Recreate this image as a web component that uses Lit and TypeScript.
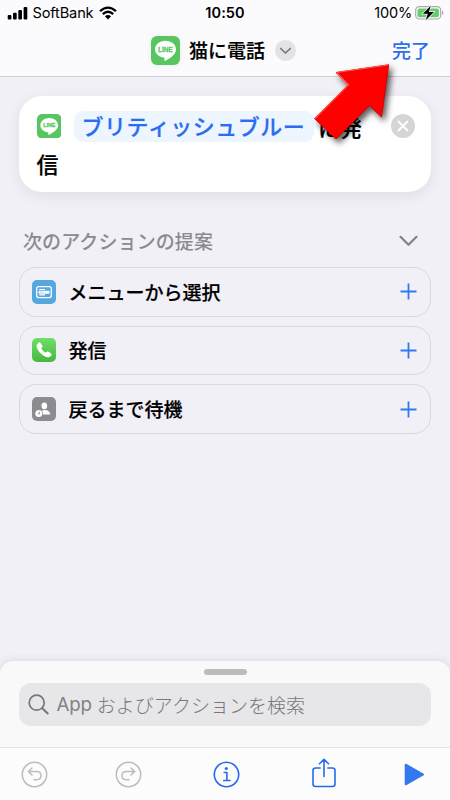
import { LitElement, html, css, svg } from "lit";
import { customElement, property } from "lit/decorators.js";

const fontStack = css`"Noto Sans CJK JP", "Noto Sans", sans-serif`;

@customElement("line-icon")
class LineIcon extends LitElement {
  static styles = css`
    :host { display: block; flex: none; }
    svg { display: block; width: 100%; height: 100%; }
    .word { font: 700 7.2px "Liberation Sans", sans-serif; fill: #57c660; stroke: #57c660; stroke-width: 0.3; }
  `;
  render() {
    return html`<svg viewBox="0 0 29 29">
      <rect width="29" height="29" rx="6" fill="#57c660" />
      <path fill="#fff" d="M14.5 4.8C8.600 4.800 4 8.600 4 13.300C4 17.500 7.700 20.900 12.600 21.600C13.900 21.900 13.500 22.900 13.300 24.100C13.200 24.800 13.700 25 14.300 24.700C17 23.300 20.600 21.100 22.900 18.400C24.300 16.900 25 15.200 25 13.300C25 8.600 20.400 4.800 14.500 4.800Z" />
      <text class="word" x="7.300" y="15.700" textLength="14.400" lengthAdjust="spacingAndGlyphs">LINE</text>
    </svg>`;
  }
}

const glyphs: Record<string, unknown> = {
  menu: svg`<rect width="24" height="24" rx="5" fill="#55a8df"/>
    <rect x="4.700" y="6.600" width="14.600" height="11" rx="2" fill="none" stroke="#fff" stroke-width="1.300"/>
    <path d="M7.300 9.500H13M7.300 14.900H13" stroke="#fff" stroke-width="1.100"/>
    <rect x="6.500" y="10.700" width="11" height="3" rx=".8" fill="#fff"/>
    <path d="M7.800 12.200H11.500" stroke="#8cc5ea" stroke-width=".7"/>`,
  phone: svg`<defs><linearGradient id="g" x1="0" y1="0" x2="0" y2="1"><stop stop-color="#70df69"/><stop offset="1" stop-color="#47b83f"/></linearGradient></defs>
    <rect width="24" height="24" rx="5" fill="url(#g)"/>
    <path fill="#fff" d="M6.600 4.700C7.300 4.100 8 4.200 8.500 4.900L10.200 7.500C10.700 8.300 10.500 9 9.900 9.600C9.200 10.300 9.300 10.600 9.700 11.200C10.600 12.500 11.700 13.600 13 14.400C13.600 14.700 13.800 14.600 14.300 14.100C15 13.400 15.700 13.300 16.500 13.800L19 15.500C19.800 16.100 19.900 16.800 19.300 17.500C18.100 19.100 16.400 19.700 14.300 18.900C10.100 17.300 6.300 13.500 4.800 9.400C4.100 7.400 4.900 5.900 6.600 4.700Z"/>`,
  wait: svg`<rect width="24" height="24" rx="5" fill="#8c8b91"/>
    <ellipse cx="12.300" cy="8.900" rx="2.800" ry="3.300" fill="#fff"/>
    <path fill="#fff" d="M7.600 15.800C8.600 13.700 10.300 12.900 12.400 12.900C15.500 12.900 18 14.500 18.200 16.700C18.200 17.300 17.900 17.600 17.300 17.600H9Z"/>
    <circle cx="6.800" cy="16.500" r="4.300" fill="#8c8b91"/>
    <circle cx="6.800" cy="16.500" r="3.500" fill="#fff"/>
    <path d="M7.500 14.800V16.900H5.700" fill="none" stroke="#8c8b91" stroke-width=".8"/>`,
};

@customElement("action-row")
class ActionRow extends LitElement {
  @property() icon = "menu";
  @property() label = "";
  static styles = css`
    :host {
      display: flex; align-items: center; box-sizing: border-box; height: 49.500px;
      border: 1.300px solid #d9d8dd; border-radius: 17px; padding: 0 13px 0 11.500px;
      font: 500 19px/28px ${fontStack};
    }
    .glyph { width: 24px; height: 24px; flex: none; margin-right: 13px; }
    .label { flex: 1; white-space: nowrap; -webkit-text-stroke: 0.2px #000; }
    .plus { width: 17px; height: 17px; flex: none; }
  `;
  render() {
    return html`
      <svg class="glyph" viewBox="0 0 24 24">${glyphs[this.icon]}</svg>
      <span class="label">${this.label}</span>
      <svg class="plus" viewBox="0 0 17 17"><path d="M8.500 .5V16.500M.5 8.500H16.500" stroke="#3478ee" stroke-width="1.800"/></svg>`;
  }
}

@customElement("app-root")
class AppRoot extends LitElement {
  static styles = css`
    :host {
      display: flex; flex-direction: column; position: relative; width: 450px; height: 800px;
      overflow: hidden; background: #f1f0f6; color: #000; font-family: ${fontStack};
    }
    svg { display: block; flex: none; }
    .top { height: 77px; box-sizing: border-box; background: #fbfbfd; border-bottom: 1.500px solid #d0d0d4; flex: none; }
    .status { height: 24px; display: grid; grid-template-columns: 1fr auto 1fr; align-items: center; padding: 0 6px 0 7px; font: 15px/24px Inter, sans-serif; }
    .carrier { display: flex; align-items: center; }
    .carrier span { margin: 1px 6px 0 4.500px; font-size: 14.600px; letter-spacing: -0.150px; }
    .clock { font-weight: 600; font-size: 14.500px; letter-spacing: 0.100px; padding-top: 1px; margin-left: -1px; }
    .power { display: flex; align-items: center; justify-content: flex-end; }
    .power span { margin: 1px 3px 0 0; font-size: 14.500px; letter-spacing: -0.200px; }
    .nav { height: 52px; display: grid; grid-template-columns: 1fr auto 1fr; align-items: center; padding: 0 20px; }
    .title { display: flex; align-items: center; font: 500 19px/28px ${fontStack}; -webkit-text-stroke: 0.200px #000; margin-left: -3px; }
    .app { width: 29px; height: 29px; margin-right: 9px; filter: drop-shadow(0 0 3px rgba(0,0,0,.06)); }
    .drop { margin-left: 10px; }
    .done { justify-self: end; font: 500 19px/28px ${fontStack}; color: #2c6fec; }
    .main { flex: 1; padding: 19px 19px 0; }
    .card {
      height: 96px; box-sizing: border-box; border-radius: 23px; background: #fff; padding: 11px 16.500px 0 17.500px;
      box-shadow: 0 4px 14px rgba(50,45,80,.09); font: 500 22px/36px ${fontStack};
    }
    .line { display: flex; align-items: center; height: 38px; -webkit-text-stroke: 0.200px currentColor; }
    .line.second { height: 36px; }
    .mini { width: 24.500px; height: 24.500px; margin-right: 12.500px; }
    .token { box-sizing: border-box; width: 240px; height: 31px; line-height: 28px; border-radius: 9px; padding-left: 8px; background: #edf5fe; color: #2b6df0; letter-spacing: 0.500px; white-space: nowrap; }
    .suffix { margin-left: 4.500px; flex: 1; white-space: nowrap; }
    .heading { display: flex; align-items: center; justify-content: space-between; height: 28px; margin: 35px 13px 12px 4px; font: 500 19px/28px ${fontStack}; color: #8b8a90; letter-spacing: 0.100px; }
    .rows { display: grid; gap: 9.200px; }
    .sheet { height: 86px; box-sizing: border-box; flex: none; background: #f9f9fa; border-radius: 13px 13px 0 0; box-shadow: 0 0 9px rgba(50,45,80,.13); padding: 7.500px 19px 0; }
    .grip { width: 43px; height: 6px; border-radius: 3px; background: #bcbcbd; margin: 0 auto 8.500px; }
    .search { height: 43px; border-radius: 12px; background: #e7e7e9; display: flex; align-items: center; padding-left: 9px; color: #77767c; font: 300 19px/28px ${fontStack}; }
    .search .latin { font: 400 18.800px/28px Inter, sans-serif; margin: 0 5px 0 7.500px; letter-spacing: -0.200px; color: #828187; }
    .bar { position: relative; height: 53px; box-sizing: border-box; flex: none; border-top: 1px solid #e5e5e7; background: #fcfcfc; display: flex; align-items: center; padding: 0 0 0 21px; }
    .redo { margin-left: 66.500px; }
    .info { margin-left: 71px; }
    .share { margin: -3px 0 0 72.500px; }
    .play { margin-left: 67.500px; }
    .arrow { position: absolute; left: 300px; top: 50px; filter: drop-shadow(3px 4px 3px rgba(0,0,0,.65)); }
  `;
  render() {
    return html`
      <header class="top">
        <div class="status">
          <div class="carrier">
            <svg width="21" height="14" viewBox="0 0 21 14"><rect x=".7" y="9" width="3.700" height="4.500" rx="1"/><rect x="6" y="6.800" width="3.700" height="6.700" rx="1"/><rect x="11.300" y="4" width="3.700" height="9.500" rx="1"/><rect x="16.600" y="1" width="3.700" height="12.500" rx="1"/></svg>
            <span>SoftBank</span>
            <svg width="18" height="14" viewBox="0 0 18 14"><g fill="none" stroke="#000" stroke-width="2.300"><path d="M1 5.200Q9-2 17 5.200"/><path d="M3.800 8.200Q9 3.400 14.200 8.200"/></g><path d="M5.900 10.200Q9 7.700 12.100 10.200L9 13.500Z"/></svg>
          </div>
          <div class="clock">10:50</div>
          <div class="power">
            <span>100%</span>
            <svg width="29" height="16" viewBox="0 0 29 16"><rect x=".7" y="1.700" width="25" height="12.300" rx="3.600" fill="none" stroke="#aaa" stroke-width="1.200"/><rect x="2.500" y="3.500" width="21.400" height="8.700" rx="2" fill="#65cb6c"/><path d="M27 5.800Q28.400 6.300 28.400 7.900T27 10Z" fill="#aaa"/><path d="M15.800.8L7.800 8.800H12.800L10.700 15.200L18.900 7H13.900Z" stroke="#fbfbfd" stroke-width="1.400" paint-order="stroke"/></svg>
          </div>
        </div>
        <div class="nav">
          <span></span>
          <div class="title">
            <line-icon class="app"></line-icon><span>猫に電話</span>
            <svg class="drop" width="21" height="21" viewBox="0 0 21 21"><circle cx="10.500" cy="10.500" r="10.500" fill="#e3e3e6"/><path d="M5.700 8.500L10.500 13L15.300 8.500" fill="none" stroke="#77767c" stroke-width="1.700" stroke-linecap="round" stroke-linejoin="round"/></svg>
          </div>
          <div class="done">完了</div>
        </div>
      </header>
      <main class="main">
        <section class="card">
          <div class="line">
            <line-icon class="mini"></line-icon><span class="token">ブリティッシュブルー</span><span class="suffix">に発</span>
            <svg width="24" height="24" viewBox="0 0 24 24"><circle cx="12" cy="12" r="12" fill="#d5d5d7"/><path d="M7.500 7.500L16.500 16.500M16.500 7.500L7.500 16.500" stroke="#fff" stroke-width="1.800" stroke-linecap="round"/></svg>
          </div>
          <div class="line second">信</div>
        </section>
        <div class="heading"><span>次のアクションの提案</span>
          <svg width="19" height="12" viewBox="0 0 19 12"><path d="M1.500 1.800L9.500 9.800L17.500 1.800" fill="none" stroke="#838288" stroke-width="2.200" stroke-linecap="round" stroke-linejoin="round"/></svg>
        </div>
        <div class="rows">
          <action-row icon="menu" label="メニューから選択"></action-row>
          <action-row icon="phone" label="発信"></action-row>
          <action-row icon="wait" label="戻るまで待機"></action-row>
        </div>
      </main>
      <section class="sheet">
        <div class="grip"></div>
        <div class="search">
          <svg width="21" height="21" viewBox="0 0 21 21" fill="none" stroke="#77767c" stroke-width="1.700" stroke-linecap="round"><circle cx="8.700" cy="8.700" r="7.500"/><path d="M14.300 14.300L19.700 19.400" stroke-width="2.100"/></svg>
          <span class="latin">App</span><span>およびアクションを検索</span>
        </div>
      </section>
      <nav class="bar">
        <svg class="undo" width="27" height="27" viewBox="0 0 27 27" fill="none" stroke="#bcbcbd" stroke-width="1.500" stroke-linecap="round" stroke-linejoin="round"><circle cx="13.500" cy="13.500" r="12.200"/><path d="M11 7L7.300 10.500L11 14M7.500 10.500H15.500C18.300 10.500 20 12.200 20 14.600S18.300 18.700 15.800 18.700H13"/></svg>
        <svg class="redo" width="27" height="27" viewBox="0 0 27 27" fill="none" stroke="#bcbcbd" stroke-width="1.500" stroke-linecap="round" stroke-linejoin="round"><circle cx="13.500" cy="13.500" r="12.200"/><path d="M16 7L19.700 10.500L16 14M19.500 10.500H11.500C8.700 10.500 7 12.200 7 14.600S8.700 18.700 11.200 18.700H14"/></svg>
        <svg class="info" width="27" height="27" viewBox="0 0 27 27" fill="none" stroke="#2669eb" stroke-width="1.600" stroke-linecap="round" stroke-linejoin="round"><circle cx="13.500" cy="13.500" r="12.200"/><circle cx="13.300" cy="7.500" r="1.600" fill="#2669eb" stroke="none"/><path d="M11.200 11.500H13.900V19.300M10.700 19.500H17"/></svg>
        <svg class="share" width="24" height="30" viewBox="0 0 24 30" fill="none" stroke="#2669eb" stroke-width="1.600" stroke-linecap="round" stroke-linejoin="round"><path d="M8.200 10H3.500Q1 10 1 12.500V26Q1 28.500 3.500 28.500H20.500Q23 28.500 23 26V12.500Q23 10 20.500 10H15.800M12 18.500V1.500M7.500 5.800L12 1.300L16.500 5.800"/></svg>
        <svg class="play" width="21" height="23" viewBox="0 0 21 23"><path d="M1.700 1.700V21.300L19.200 11.500Z" fill="#3478f0" stroke="#3478f0" stroke-width="2" stroke-linejoin="round"/></svg>
      </nav>
      <svg class="arrow" width="100" height="95" viewBox="300 50 100 95">
        <path d="M388.700 64.800L336 72.500L348.500 84.500L314.500 118.500L336 139L369.500 105.500L381.500 117Z" fill="#fe0000" stroke="#d60000" stroke-width="1"/>
        <path d="M336.500 72.500L388 65M315 118.500L348.500 84.800L337 73" fill="none" stroke="#ff5b50" stroke-width="1.200"/>
      </svg>`;
  }
}
